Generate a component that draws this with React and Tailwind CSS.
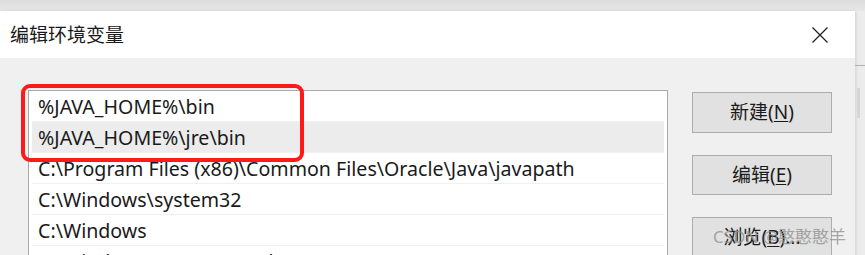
import React from "react";

const FONT = { fontFamily: '"Noto Sans", "Noto Sans CJK SC", sans-serif' };

const rows = [
  "%JAVA_HOME%\\bin",
  "%JAVA_HOME%\\jre\\bin",
  "C:\\Program Files (x86)\\Common Files\\Oracle\\Java\\javapath",
  "C:\\Windows\\system32",
  "C:\\Windows",
  "C:\\Windows\\System32\\Wbem",
];

function Btn({ children }) {
  return (
    <div className="w-[140px] h-[41px] bg-[#e1e1e1] border border-[#adadad] flex items-center justify-center text-[19px] text-[#1a1a1a] leading-none">
      {children}
    </div>
  );
}

export default function App() {
  return (
    <div
      className="w-[865px] h-[255px] overflow-hidden bg-[#ececec] relative"
      style={FONT}
    >
      <div className="h-[11px] bg-gradient-to-b from-[#dcdcdc] to-[#e8e8e8]" />
      <div className="flex">
        <div className="w-[855px] shrink-0 shadow-[1px_0_3px_rgba(0,0,0,0.12)]">
          <div className="h-[47px] bg-white flex items-center justify-between pl-[10px] pr-[27px]">
            <span className="text-[19px] text-[#1a1a1a] leading-none mt-[1px]">
              编辑环境变量
            </span>
            <svg width="16" height="16" viewBox="0 0 16 16" className="mt-[1px]">
              <path d="M0.5 0.5 L15.5 15.5 M15.5 0.5 L0.5 15.5" stroke="#222" strokeWidth="1.3" fill="none" />
            </svg>
          </div>
          <div className="h-[200px] bg-[#f0f0f0] flex pl-[28px] pt-[32px] gap-[24px]">
            <div className="w-[640px] h-[200px] bg-white border border-[#a8a8a8] pl-[3px] pr-[3px]">
              {rows.map((r, i) => (
                <div
                  key={i}
                  className={
                    "h-[31px] border-b border-[#f0f0f0] flex items-center pl-[6px] pt-[2px] text-[19.6px] leading-none text-[#1a1a1a] whitespace-nowrap " +
                    (i === 1 ? "bg-[#ececec]" : "bg-white")
                  }
                >
                  {r}
                </div>
              ))}
            </div>
            <div className="flex flex-col gap-[22px] pt-[2px]">
              <Btn>
                新建(<span className="underline underline-offset-2">N</span>)
              </Btn>
              <Btn>
                编辑(<span className="underline underline-offset-2">E</span>)
              </Btn>
              <Btn>
                浏览(<span className="underline underline-offset-2">B</span>)...
              </Btn>
            </div>
          </div>
        </div>
        <div className="flex-1 relative">
          <div className="h-[55px] border-b border-[#b0b0b0]" />
          <div className="ml-[2px] mt-[22px] w-[3px] h-[30px] bg-[#d6d6d6]" />
        </div>
      </div>
      <div className="absolute left-[21px] top-[84px] w-[283px] h-[78px] border-[4px] border-[#ff1a1a] rounded-[9px]" />
      <div className="absolute left-[713px] top-[228px] text-[17px] leading-none text-[#909090]/80 whitespace-nowrap">
        CSDN @憨憨憨羊
      </div>
    </div>
  );
}
